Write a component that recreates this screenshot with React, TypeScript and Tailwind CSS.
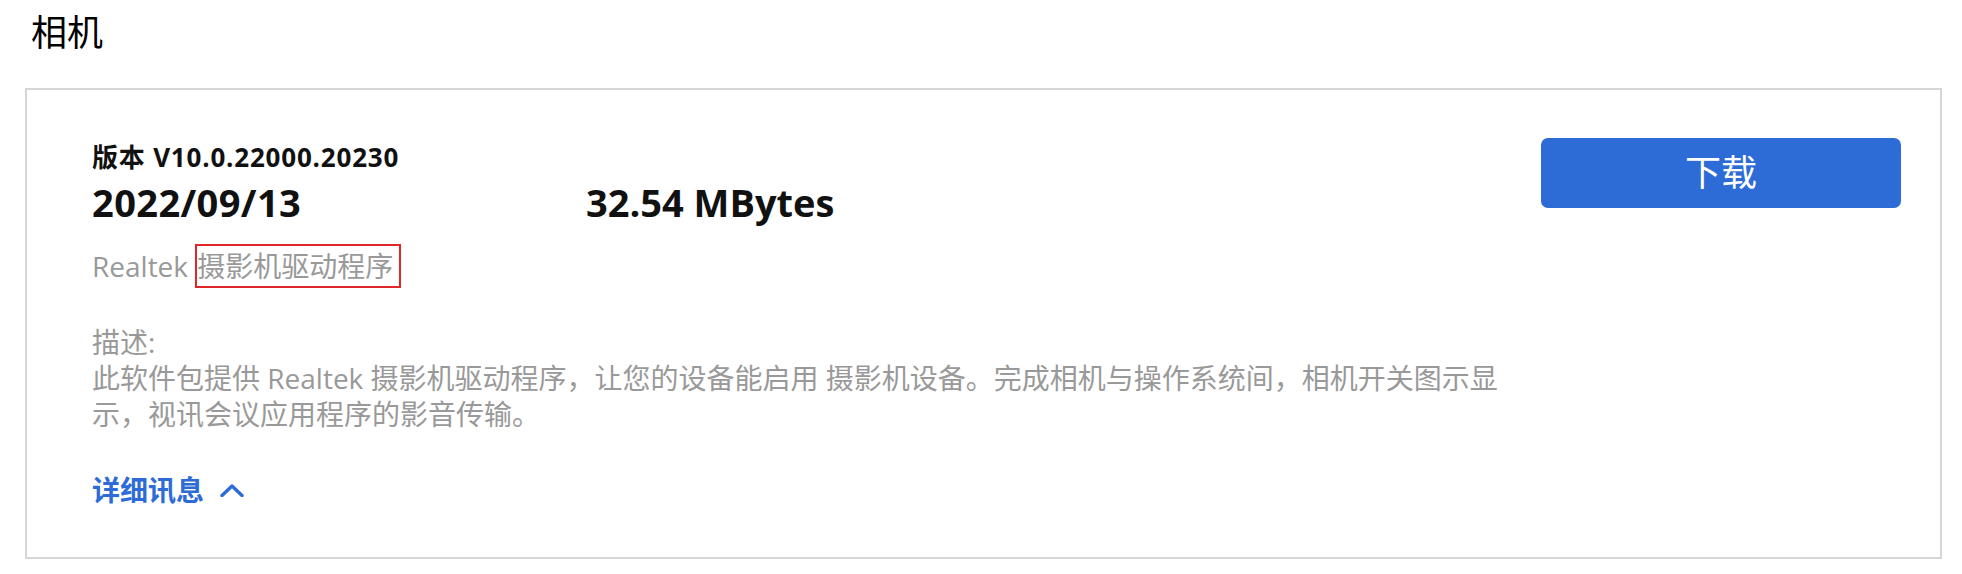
const font = { fontFamily: '"Open Sans", "Noto Sans CJK SC", sans-serif' };

function ChevronUp() {
    return (
        <svg width="24" height="13" viewBox="0 0 24 13" fill="none" className="ml-[16px]">
            <polyline points="2,11.5 12,2 22,11.5" stroke="#2d6bd6" strokeWidth="3.4" strokeLinecap="round" strokeLinejoin="round" />
        </svg>
    );
}

export default function App() {
    return (
        <div className="bg-white w-[1962px] h-[574px] pl-[31px] pr-[20px] pt-[12px] text-black" style={font}>
            <h1 className="text-[36px] leading-[42px] font-normal">相机</h1>

            {/* Driver card */}
            <div className="mt-[34px] ml-[-6px] border-2 border-[#d6d6d6] flex justify-between pl-[65px] pr-[39px] pb-[49px]">
                <div className="pt-[52px] flex flex-col">
                    <div className="text-[26px] leading-[30px] font-bold tracking-[0.8px] text-[#111]">版本 V10.0.22000.20230</div>

                    <div className="mt-[7px] flex text-[38px] leading-[46px] font-bold text-[#111]">
                        <span className="w-[494px] tracking-[0.4px]">2022/09/13</span>
                        <span>32.54 MBytes</span>
                    </div>

                    <div className="mt-[19px] h-[44px] flex items-center text-[28px] text-[#999]">
                        <span>Realtek&nbsp;</span>
                        <span className="h-[44px] flex items-center border-2 border-[#e0262b] pr-[6px]">摄影机驱动程序</span>
                    </div>

                    <div className="mt-[36px] text-[28px] leading-[36px] text-[#999]">
                        <p>描述:</p>
                        <p className="w-[1420px]">
                            此软件包提供 Realtek 摄影机驱动程序，让您的设备能启用 摄影机设备。完成相机与操作系统间，相机开关图示显示，视讯会议应用程序的影音传输。
                        </p>
                    </div>

                    <button className="mt-[40px] flex items-center h-[36px] text-[28px] font-bold text-[#2d6bd6] self-start">
                        详细讯息
                        <ChevronUp />
                    </button>
                </div>

                <button className="mt-[48px] w-[360px] h-[70px] rounded-[7px] bg-[#2d6bd6] text-white text-[36px] leading-none shrink-0">
                    下载
                </button>
            </div>
        </div>
    );
}
